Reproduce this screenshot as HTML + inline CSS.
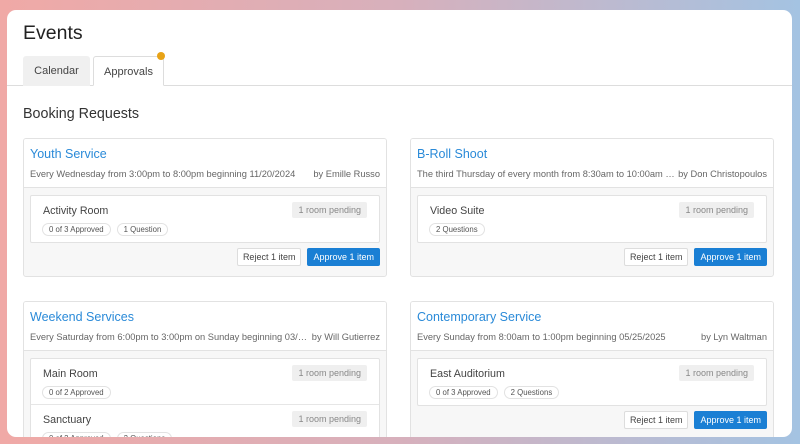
<!DOCTYPE html>
<html><head><style>
*{box-sizing:border-box;margin:0;padding:0}
body{width:800px;height:444px;overflow:hidden;font-family:"Liberation Sans",sans-serif;background:linear-gradient(90deg,#f0a9a6 0%,#d7b0bc 50%,#a4c3e2 100%);position:relative}
.panel{position:absolute;left:7px;top:10px;width:785px;height:427px;background:#fff;border-radius:9px;overflow:hidden}
h1{position:absolute;left:16px;top:12px;font-size:19.5px;font-weight:normal;color:#222}
.tabline{position:absolute;left:0;right:0;top:75px;border-top:1px solid #ddd}
.tab{position:absolute;top:46px;height:30px;font-size:11px;color:#444;text-align:center;line-height:30px;border-radius:3px 3px 0 0}
.t1{left:16px;width:67px;background:#f0f0f0}
.t2{left:86px;width:71px;background:#fff;border:1px solid #ddd;border-bottom:1px solid #fff}
.dot{position:absolute;left:150px;top:42px;width:8px;height:8px;border-radius:50%;background:#e8a317}
h2{position:absolute;left:16px;top:96px;font-size:14.3px;font-weight:normal;color:#333}
.card{position:absolute;width:364px;border:1px solid #e2e2e2;border-radius:3px;background:#f7f7f7;overflow:hidden}
.hd{background:#fff;height:49px;border-bottom:1px solid #e2e2e2;position:relative}
.ti{position:absolute;left:6px;top:8px;font-size:12.5px;color:#2a8ad8}
.sub{position:absolute;left:6px;top:30px;right:6px;font-size:9.3px;color:#666;display:flex;justify-content:space-between;white-space:nowrap}
.rooms{margin:7px 6px 0;border:1px solid #e2e2e2;border-radius:2px;background:#fff}
.room{height:46px;position:relative;border-bottom:1px solid #e6e6e6}
.room:last-child{border-bottom:none}
.rn{position:absolute;left:12px;top:9px;font-size:10.7px;color:#444}
.pend{position:absolute;right:12px;top:6px;background:#efefef;color:#888;font-size:9px;padding:3px 6px;border-radius:2px}
.tags{position:absolute;left:11px;top:27px;display:flex;gap:6px}
.tag{font-size:7.8px;color:#555;border:1px solid #e2e2e2;border-radius:8px;padding:1px 6px}
.btns{display:flex;justify-content:flex-end;gap:6px;padding:5px 6px 10px}
.b{font-size:9px;height:18px;line-height:16px;padding:0 5px;border-radius:2px;border:1px solid #ddd;background:#fff;color:#444}
.b.p{background:#1a7fd4;border-color:#1a7fd4;color:#fff}
</style></head><body>
<div class="panel">
<h1>Events</h1>
<div class="tabline"></div>
<div class="tab t1">Calendar</div>
<div class="tab t2">Approvals</div>
<div class="dot"></div>
<h2>Booking Requests</h2>

<div class="card" style="left:16px;top:128px">
<div class="hd"><div class="ti">Youth Service</div><div class="sub"><span>Every Wednesday from 3:00pm to 8:00pm beginning 11/20/2024</span><span>by Emille Russo</span></div></div>
<div class="rooms"><div class="room"><div class="rn">Activity Room</div><div class="pend">1 room pending</div><div class="tags"><span class="tag">0 of 3 Approved</span><span class="tag">1 Question</span></div></div></div>
<div class="btns"><span class="b">Reject 1 item</span><span class="b p">Approve 1 item</span></div>
</div>

<div class="card" style="left:403px;top:128px">
<div class="hd"><div class="ti">B-Roll Shoot</div><div class="sub"><span>The third Thursday of every month from 8:30am to 10:00am …</span><span>by Don Christopoulos</span></div></div>
<div class="rooms"><div class="room"><div class="rn">Video Suite</div><div class="pend">1 room pending</div><div class="tags"><span class="tag">2 Questions</span></div></div></div>
<div class="btns"><span class="b">Reject 1 item</span><span class="b p">Approve 1 item</span></div>
</div>

<div class="card" style="left:16px;top:291px">
<div class="hd"><div class="ti">Weekend Services</div><div class="sub"><span>Every Saturday from 6:00pm to 3:00pm on Sunday beginning 03/…</span><span>by Will Gutierrez</span></div></div>
<div class="rooms"><div class="room"><div class="rn">Main Room</div><div class="pend">1 room pending</div><div class="tags"><span class="tag">0 of 2 Approved</span></div></div>
<div class="room"><div class="rn">Sanctuary</div><div class="pend">1 room pending</div><div class="tags"><span class="tag">0 of 2 Approved</span><span class="tag">2 Questions</span></div></div></div>
</div>

<div class="card" style="left:403px;top:291px">
<div class="hd"><div class="ti">Contemporary Service</div><div class="sub"><span>Every Sunday from 8:00am to 1:00pm beginning 05/25/2025</span><span>by Lyn Waltman</span></div></div>
<div class="rooms"><div class="room"><div class="rn">East Auditorium</div><div class="pend">1 room pending</div><div class="tags"><span class="tag">0 of 3 Approved</span><span class="tag">2 Questions</span></div></div></div>
<div class="btns"><span class="b">Reject 1 item</span><span class="b p">Approve 1 item</span></div>
</div>
</div>
</body></html>
